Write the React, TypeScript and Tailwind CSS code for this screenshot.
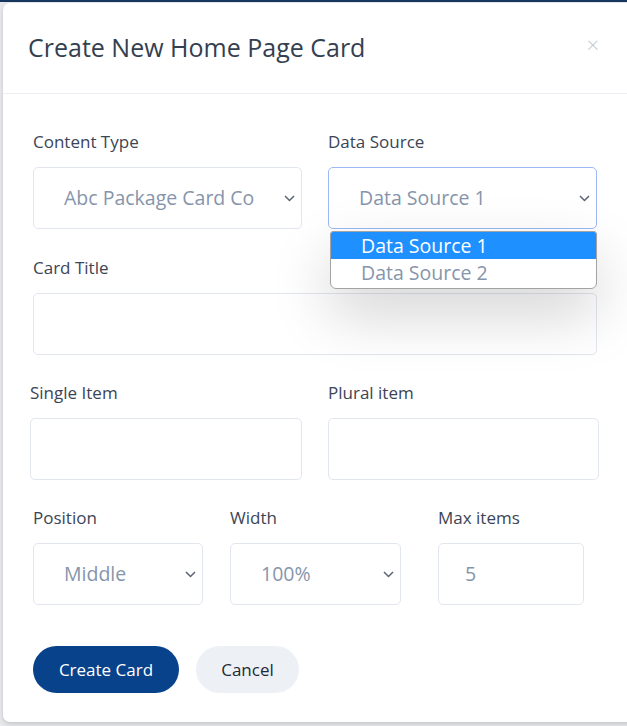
import React from "react";

const font = { fontFamily: "'Open Sans', 'Noto Sans', sans-serif" };

function Chevron() {
  return (
    <svg width="11" height="7" viewBox="0 0 11 7" className="shrink-0">
      <polyline points="1,1 5.5,5.5 10,1" fill="none" stroke="#5b6472" strokeWidth="1.5" />
    </svg>
  );
}

function Label({ children }: { children: React.ReactNode }) {
  return <div className="h-6 text-[17px] leading-6 text-[#3b4556] mb-[13px]">{children}</div>;
}

function Select({ value, focused, w }: { value: string; focused?: boolean; w: string }) {
  return (
    <div
      className={`${w} h-[62px] flex items-center justify-between pl-[30px] pr-[6px] bg-white rounded-[5px] border ${
        focused ? "border-[#9db8f2]" : "border-[#e2e6ee]"
      }`}
    >
      <span className="text-[19.5px] text-[#8695ab] whitespace-nowrap overflow-hidden">{value}</span>
      <Chevron />
    </div>
  );
}

function Input({ w, value }: { w: string; value?: string }) {
  return (
    <div className={`${w} h-[62px] flex items-center pl-[26px] bg-white rounded-[5px] border border-[#e2e6ee]`}>
      <span className="text-[19.5px] text-[#8695ab]">{value}</span>
    </div>
  );
}

export default function App() {
  return (
    <div className="w-[627px] h-[726px] overflow-hidden bg-[#e6e8eb] border-t-[2px] border-[#17365d]" style={font}>
      <div className="relative ml-[3px] mt-[1px] w-[640px] h-[719px] bg-white rounded-[7px] shadow-[0_2px_4px_rgba(0,0,0,0.15)]">
        {/* header */}
        <div className="h-[91px] flex items-center justify-between pl-[25px] pr-[44px] border-b border-[#eceef3]">
          <h2 className="text-[25px] text-[#343f50]">Create New Home Page Card</h2>
          <span className="text-[22px] text-[#c4c8cf] leading-none font-light -mt-[8px]">×</span>
        </div>

        {/* body */}
        <div className="pl-[30px] pt-[36px]">
          <div className="flex gap-[26px]">
            <div>
              <Label>Content Type</Label>
              <Select w="w-[269px]" value="Abc Package Card Co" />
            </div>
            <div className="relative">
              <Label>Data Source</Label>
              <Select w="w-[269px]" value="Data Source 1" focused />
              <div className="absolute left-[2px] top-[101px] w-[267px] z-10 bg-white border border-[#a3a3a3] rounded-b-[6px] rounded-t-[3px] pb-[2px] overflow-hidden shadow-[0_25px_60px_rgba(0,0,0,0.18)]">
                <div className="h-[27px] flex items-center pl-[30px] bg-[#1e90ff] text-white text-[19.5px]">Data Source 1</div>
                <div className="h-[27px] flex items-center pl-[30px] text-[#8695ab] text-[19.5px]">Data Source 2</div>
              </div>
            </div>
          </div>

          <div className="mt-[27px]">
            <Label>Card Title</Label>
            <Input w="w-[564px]" />
          </div>

          <div className="mt-[26px] flex gap-[26px] -ml-[3px]">
            <div>
              <Label>Single Item</Label>
              <Input w="w-[272px]" />
            </div>
            <div>
              <Label>Plural item</Label>
              <Input w="w-[271px]" />
            </div>
          </div>

          <div className="mt-[26px] flex">
            <div>
              <Label>Position</Label>
              <Select w="w-[170px]" value="Middle" />
            </div>
            <div className="ml-[27px]">
              <Label>Width</Label>
              <Select w="w-[171px]" value="100%" />
            </div>
            <div className="ml-[37px]">
              <Label>Max items</Label>
              <Input w="w-[146px]" value="5" />
            </div>
          </div>

          <div className="mt-[41px] flex gap-[17px]">
            <button className="h-[47px] w-[146px] rounded-full bg-[#08428b] text-white text-[17px]">Create Card</button>
            <button className="h-[47px] w-[103px] rounded-full bg-[#edf1f6] text-[#1f2937] text-[17px]">Cancel</button>
          </div>
        </div>
      </div>
    </div>
  );
}
